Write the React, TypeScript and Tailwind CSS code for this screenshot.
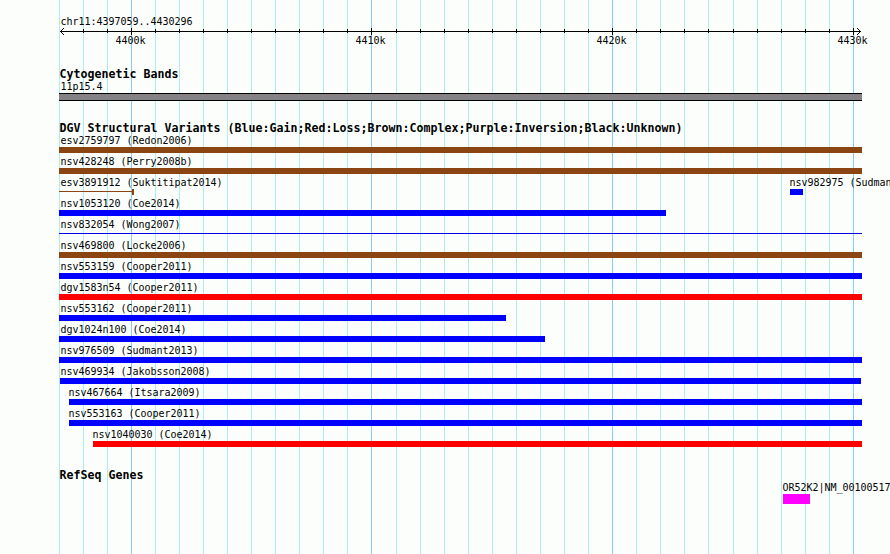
type Feature = {
  name: string;
  start: number;
  end: number;
  color: string;
  kind?: 'bar' | 'line' | 'lineWithEnd';
};

const BROWN = 'bg-[#8b4513]';
const BLUE = 'bg-[#0000ff]';
const RED = 'bg-[#ff0000]';

const LEFT = 59;
const RIGHT = 862;

const gridLines = [
  59, 83, 107, 131, 155, 179, 203, 227, 251, 275, 299, 323, 347, 371, 396, 420, 444, 468, 492, 516, 540, 564, 588, 612,
  636, 660, 684, 708, 733, 757, 781, 805, 829, 853,
];

const majors = [
  { x: 131, label: '4400k' },
  { x: 371, label: '4410k' },
  { x: 612, label: '4420k' },
  { x: 853, label: '4430k' },
];

const isMajor = (x: number) => majors.some((m) => m.x === x);

const variants: Feature[][] = [
  [{ name: 'esv2759797 (Redon2006)', start: LEFT, end: RIGHT, color: BROWN }],
  [{ name: 'nsv428248 (Perry2008b)', start: LEFT, end: RIGHT, color: BROWN }],
  [
    { name: 'esv3891912 (Suktitipat2014)', start: LEFT, end: 134, color: BROWN, kind: 'lineWithEnd' },
    { name: 'nsv982975 (Sudmant2013)', start: 790, end: 803, color: BLUE },
  ],
  [{ name: 'nsv1053120 (Coe2014)', start: LEFT, end: 666, color: BLUE }],
  [{ name: 'nsv832054 (Wong2007)', start: LEFT, end: RIGHT, color: 'bg-[#0000e0]', kind: 'line' }],
  [{ name: 'nsv469800 (Locke2006)', start: LEFT, end: RIGHT, color: BROWN }],
  [{ name: 'nsv553159 (Cooper2011)', start: LEFT, end: RIGHT, color: BLUE }],
  [{ name: 'dgv1583n54 (Cooper2011)', start: LEFT, end: RIGHT, color: RED }],
  [{ name: 'nsv553162 (Cooper2011)', start: LEFT, end: 506, color: BLUE }],
  [{ name: 'dgv1024n100 (Coe2014)', start: LEFT, end: 545, color: BLUE }],
  [{ name: 'nsv976509 (Sudmant2013)', start: LEFT, end: RIGHT, color: BLUE }],
  [{ name: 'nsv469934 (Jakobsson2008)', start: 60, end: 861, color: BLUE }],
  [{ name: 'nsv467664 (Itsara2009)', start: 69, end: RIGHT, color: BLUE }],
  [{ name: 'nsv553163 (Cooper2011)', start: 69, end: RIGHT, color: BLUE }],
  [{ name: 'nsv1040030 (Coe2014)', start: 93, end: RIGHT, color: RED }],
];

function GridLines() {
  return (
    <svg className="absolute inset-0" width="890" height="554" shapeRendering="crispEdges">
      {gridLines.map((x) => (
        <rect key={x} x={x} y="0" width="1" height="554" fill={isMajor(x) ? '#87ceeb' : '#afeeee'} />
      ))}
    </svg>
  );
}

function Ruler() {
  return (
    <svg className="block" width="890" height="7" shapeRendering="crispEdges">
      <rect x="60" y="3" width="801" height="1" />
      {gridLines.slice(1).map((x) => (
        <rect key={x} x={x} y={isMajor(x) ? 0 : 1} width="1" height={isMajor(x) ? 7 : 4} />
      ))}
      {[1, 2, 3].map((d) => (
        <g key={d}>
          <rect x={60 + d} y={3 - d} width="1" height="1" />
          <rect x={60 + d} y={3 + d} width="1" height="1" />
          <rect x={860 - d} y={3 - d} width="1" height="1" />
          <rect x={860 - d} y={3 + d} width="1" height="1" />
        </g>
      ))}
    </svg>
  );
}

function Title({ children }: { children: string }) {
  return (
    <h2 className="ml-[59.5px] h-[13px] whitespace-nowrap text-[11.6px] leading-[13px] font-bold tracking-[0.02px]">
      {children}
    </h2>
  );
}

function Mark({ feature }: { feature: Feature }) {
  if (feature.kind === 'line') {
    return <div className={`mt-[2px] h-px ${feature.color}`} />;
  }
  if (feature.kind === 'lineWithEnd') {
    return (
      <div className="flex h-1.5">
        <div className={`mt-[2px] h-px flex-1 ${feature.color}`} />
        <div className={`h-1.5 w-0.5 ${feature.color}`} />
      </div>
    );
  }
  return <div className={`h-1.5 ${feature.color}`} />;
}

function Row({ features }: { features: Feature[] }) {
  return (
    <div className="flex h-[21px]">
      {features.map((f, i) => (
        <div
          key={f.name}
          className="shrink-0"
          style={{ width: f.end - f.start, marginLeft: f.start - (i ? features[i - 1].end : 0) }}
        >
          <div
            className={`h-[13px] whitespace-nowrap ${f.start === LEFT ? 'pl-[1.5px]' : f.start === 60 ? 'pl-[0.5px]' : '-ml-[0.5px]'}`}
          >
            {f.name}
          </div>
          <Mark feature={f} />
        </div>
      ))}
    </div>
  );
}

export default function App() {
  return (
    <main className="relative h-[554px] w-[890px] overflow-hidden bg-[#fcfefc] font-['DejaVu_Sans_Mono',monospace] text-[10px] leading-[13px] tracking-[-0.02px] text-black">
      <GridLines />
      <div className="relative flex flex-col pt-[15px]">
        <div className="ml-[60.5px] h-[13px]">chr11:4397059..4430296</div>
        <Ruler />
        <div className="-mt-px flex h-[13px]">
          {majors.map((m, i) => (
            <span
              key={m.label}
              className="w-[30px] shrink-0"
              style={{ marginLeft: m.x - 15.5 - (i ? majors[i - 1].x + 14.5 : 0) }}
            >
              {m.label}
            </span>
          ))}
        </div>

        <section className="mt-[21px]">
          <Title>Cytogenetic Bands</Title>
          <div className="-mt-px ml-[60.5px] h-[13px]">11p15.4</div>
          <div className="ml-[59px] h-2 w-[803px] border-y border-black bg-[#848284]" />
        </section>

        <section className="mt-[21px]">
          <Title>DGV Structural Variants (Blue:Gain;Red:Loss;Brown:Complex;Purple:Inversion;Black:Unknown)</Title>
          <div className="-mt-px">
            {variants.map((row) => (
              <Row key={row[0].name} features={row} />
            ))}
          </div>
        </section>

        <section className="mt-5">
          <Title>RefSeq Genes</Title>
          <div className="-mt-px ml-[783px]">
            <div className="-ml-[0.5px] h-[13px] whitespace-nowrap">OR52K2|NM_001005172</div>
            <div className="h-2.5 w-[27px] bg-[#ff00ff]" />
          </div>
        </section>
      </div>
    </main>
  );
}
